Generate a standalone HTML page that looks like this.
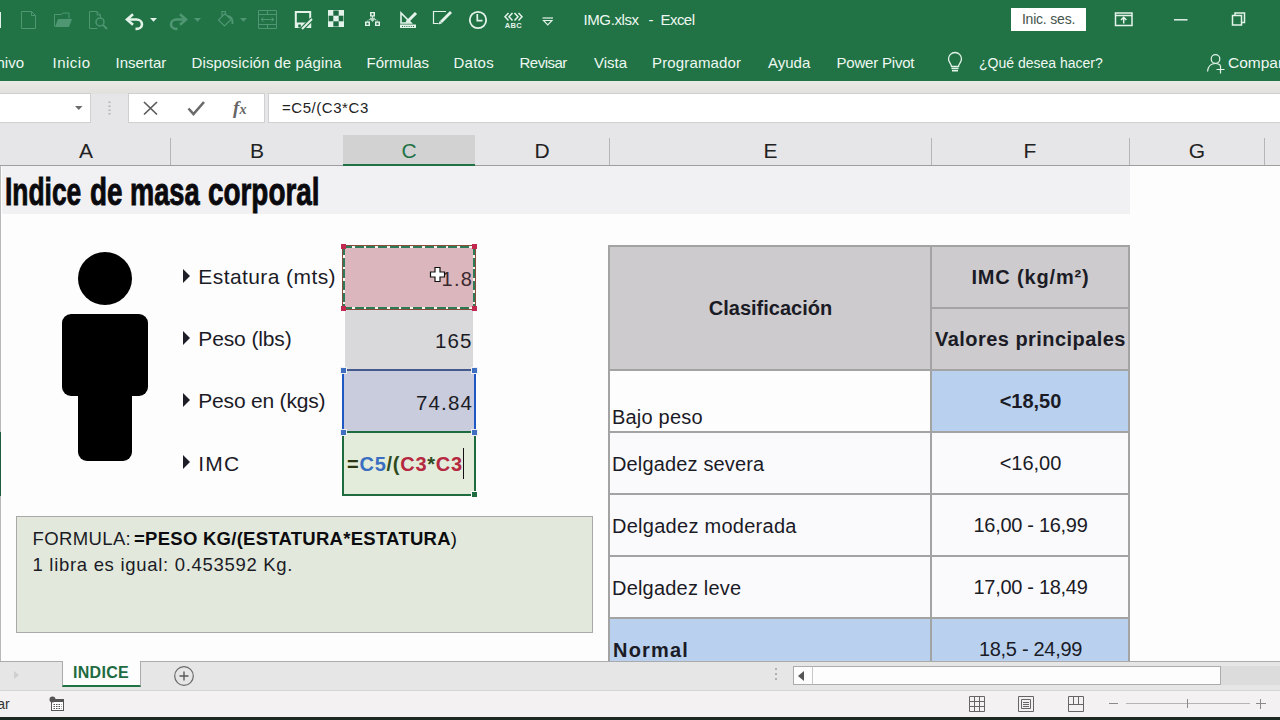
<!DOCTYPE html>
<html><head><meta charset="utf-8">
<style>
*{box-sizing:border-box;margin:0;padding:0}
html,body{width:1280px;height:720px;overflow:hidden;background:#e6e5e7;font-family:"Liberation Sans",sans-serif;}
.abs{position:absolute}
#top{position:absolute;left:0;top:0;width:1280px;height:81px;background:#217346}
.tab{position:absolute;top:53.700px;font-size:15px;line-height:18px;color:#eef8f1;white-space:pre}
#fbar div.box{position:absolute;top:93px;height:30px;background:#fff;border:1px solid #d0d0d0}
.colh{position:absolute;top:135px;height:31px;font-size:21px;line-height:32px;text-align:center;color:#222;border-bottom:1px solid #9e9e9e}
.cd{position:absolute;top:138px;width:1px;height:27px;background:#b5b5b5}
#sheet{position:absolute;left:0;top:166px;width:1280px;height:495px;background:#fefdfe;overflow:hidden}
.t{position:absolute;white-space:pre;font-size:20px;line-height:24px;color:#1b1b26}
.b{font-weight:bold}
.tri{position:absolute;width:0;height:0;border-left:7.500px solid #1e1e28;border-top:7.800px solid transparent;border-bottom:7.800px solid transparent}
.cell{position:absolute}
.hd{position:absolute;width:5px;height:5px}
.tb{position:absolute;background:#a3a3a3}
</style></head><body>
<!-- TITLE + RIBBON -->
<div id="top"></div>
<div id="title" class="abs" style="left:583.500px;top:11.300px;font-size:15px;line-height:18px;color:#eef8f1;white-space:pre;letter-spacing:-0.4px">IMG.xlsx</div><div class="abs" style="left:648.500px;top:11.300px;font-size:15px;line-height:18px;color:#eef8f1">-</div><div class="abs" style="left:660.500px;top:11.300px;font-size:15px;line-height:18px;color:#eef8f1;letter-spacing:-0.55px">Excel</div>
<div class="abs" style="left:1011px;top:8px;width:75px;height:23px;background:#fff;color:#46544c;font-size:14px;line-height:23px;text-align:center;letter-spacing:-0.2px">Inic. ses.</div>
<div id="tabs">
<div class="tab" style="left:-26px">Archivo</div>
<div class="tab" style="left:52.500px;letter-spacing:0.5px">Inicio</div>
<div class="tab" style="left:115.500px">Insertar</div>
<div class="tab" style="left:191.500px;letter-spacing:0.15px">Disposición de página</div>
<div class="tab" style="left:366.500px">Fórmulas</div>
<div class="tab" style="left:453.500px;letter-spacing:0.25px">Datos</div>
<div class="tab" style="left:519.500px;letter-spacing:-0.5px">Revisar</div>
<div class="tab" style="left:594px">Vista</div>
<div class="tab" style="left:652px;letter-spacing:0.15px">Programador</div>
<div class="tab" style="left:768px">Ayuda</div>
<div class="tab" style="left:836.500px;letter-spacing:-0.2px">Power Pivot</div>
<div class="tab" style="left:979px;font-size:14px">¿Qué desea hacer?</div>
<div class="tab" style="left:1228px;font-size:15.500px">Compartir</div>
</div>
<div id="icons">
<!-- partial save icon at far left -->
<div class="abs" style="left:0;top:12px;width:1px;height:16px;background:#e4f3ea"></div>
<svg class="abs" style="left:0;top:0" width="640" height="40" viewBox="0 0 640 40" fill="none">
<!-- new -->
<path d="M21.5 11.5h10l4 4v13h-14zM31.5 11.5v4h4" stroke="#4f9773" stroke-width="1"/>
<!-- open folder -->
<path d="M54.5 26.5v-12h7l1.5-1.500h6v5.500" stroke="#4f9773" stroke-width="1"/>
<path d="M55 27l3-8h14l-3 8z" fill="#4f9773"/>
<!-- print preview -->
<path d="M100.500 17v-2l-3.500-3.500h-7.500v17h8M97 11.500v3.500h3.500" stroke="#4f9773" stroke-width="1"/>
<circle cx="100" cy="22" r="4" stroke="#4f9773" stroke-width="1.500"/><path d="M103 25l4 4" stroke="#4f9773" stroke-width="1.800"/>
<!-- undo -->
<path d="M127.500 19.500h9a5.500 4.700 0 0 1 0 9.400h-1" stroke="#e4f3ea" stroke-width="2.600"/>
<path d="M133 14.300l-6 5.200l6 5.200" stroke="#e4f3ea" stroke-width="2.600"/>
<path d="M150 18h7l-3.500 3.800z" fill="#e4f3ea"/>
<!-- redo dim -->
<path d="M185.500 19.500h-9a5.500 4.700 0 0 0 0 9.400h1" stroke="#4f9773" stroke-width="2.600"/>
<path d="M180 14.300l6 5.200l-6 5.200" stroke="#4f9773" stroke-width="2.600"/>
<path d="M194 18h7l-3.500 3.800z" fill="#4f9773"/>
<!-- paint bucket dim -->
<path d="M218.500 20l6.500-6.500l6 6l-6.500 6.500zM222 16v-4.500h3.500v4" stroke="#4f9773" stroke-width="1.200"/>
<path d="M227 16c4 0 6 3 5.500 8" stroke="#4f9773" stroke-width="2"/>
<path d="M240 18h7l-3.500 3.800z" fill="#4f9773"/>
<!-- merge dim -->
<path d="M258.500 10.500h18v18h-18zM258.500 14.500h18M258.500 24.500h18M267.500 10.500v4M267.500 24.500v4" stroke="#4f9773" stroke-width="1"/>
<path d="M261 19.500h13M263.500 17.500l-2.500 2l2.500 2M271.500 17.500l2.500 2l-2.500 2" stroke="#4f9773" stroke-width="1"/>
<!-- save as -->
<rect x="295.800" y="12" width="14.400" height="15" stroke="#e4f3ea" stroke-width="2"/>
<rect x="296" y="22.500" width="14" height="5" fill="#e4f3ea"/>
<rect x="298.300" y="24.500" width="2.500" height="3" fill="#1d6a40"/>
<path d="M301.500 29.500l10.500-10.500" stroke="#217346" stroke-width="4.200"/>
<path d="M302 29l10-10" stroke="#e4f3ea" stroke-width="2"/>
<!-- checker -->
<rect x="328" y="10" width="16" height="17" fill="#e4f3ea"/>
<rect x="333.300" y="10.500" width="5.400" height="5.200" fill="#1d6a40"/><rect x="328.600" y="15.700" width="4.700" height="5.600" fill="#1d6a40"/><rect x="338.700" y="15.700" width="4.700" height="5.600" fill="#1d6a40"/><rect x="333.300" y="21.300" width="5.400" height="5.200" fill="#1d6a40"/>
<!-- org chart -->
<rect x="370" y="12" width="5" height="4.500" fill="#e4f3ea"/><rect x="365" y="21.500" width="5" height="4.500" fill="#e4f3ea"/><rect x="375" y="21.500" width="5" height="4.500" fill="#e4f3ea"/>
<path d="M372.500 16.500l-5 5M372.500 16.500l5 5" stroke="#e4f3ea" stroke-width="1.200" stroke-dasharray="1 1"/>
<path d="M370 19.500l2.500-2.500l2.500 2.500l-2.500 2.500z" fill="#e4f3ea" opacity="0.800"/>
<rect x="371.500" y="13.300" width="2" height="2" fill="#217346"/><rect x="366.500" y="22.800" width="2" height="2" fill="#217346"/><rect x="376.500" y="22.800" width="2" height="2" fill="#217346"/>
<!-- design mode -->
<path d="M401 13v10h10z" stroke="#e4f3ea" stroke-width="1.600"/>
<rect x="400" y="24.500" width="16" height="3.500" fill="#e4f3ea"/>
<path d="M402 26.500h12" stroke="#217346" stroke-width="1" stroke-dasharray="1 1.200"/>
<path d="M407 22l9-9" stroke="#e4f3ea" stroke-width="3"/><path d="M405.500 23.500l1-3l2 2z" fill="#e4f3ea"/>
<!-- edit box pencil -->
<path d="M446 11.500h-12.500v12h5" stroke="#e4f3ea" stroke-width="1.200"/>
<path d="M441 22l10-10" stroke="#e4f3ea" stroke-width="2.800"/><path d="M438.500 24.500l1.200-3.600l2.400 2.400z" fill="#e4f3ea"/>
<!-- clock -->
<circle cx="478" cy="20" r="8.200" stroke="#e4f3ea" stroke-width="1.800"/><path d="M477.300 14v6.700h5.200" stroke="#e4f3ea" stroke-width="1.700"/>
<!-- ABC -->
<path d="M508.500 13l-3.500 3.800l3.500 3.800M512.500 13l-3.500 3.800l3.500 3.800M514.500 13l3.500 3.800l-3.500 3.800M518.500 13l3.500 3.800l-3.500 3.800" stroke="#e4f3ea" stroke-width="1.500"/>
<text x="504.800" y="27.600" font-family="Liberation Sans" font-size="7.500" font-weight="bold" fill="#e4f3ea" letter-spacing="0.300">ABC</text>
<!-- customize -->
<path d="M542.500 18h10.500" stroke="#e4f3ea" stroke-width="1.200"/><path d="M543.500 20.500h8.500l-4.250 4.500z" stroke="#e4f3ea" stroke-width="1.100"/>
</svg>
<svg class="abs" style="left:1100px;top:0" width="180" height="80" viewBox="1100 0 180 80" fill="none">
<!-- ribbon display -->
<path d="M1115.500 13h16.500v12.500h-16.500z" stroke="#e4f3ea" stroke-width="1.500"/><path d="M1115.500 15.500h16.500" stroke="#e4f3ea" stroke-width="1.500"/>
<path d="M1123.700 23.500v-6M1121 20l2.700-2.700l2.700 2.700" stroke="#e4f3ea" stroke-width="1.500"/>
<!-- minimize -->
<path d="M1174 19.800h13.500" stroke="#e4f3ea" stroke-width="1.500"/>
<!-- restore -->
<path d="M1232.500 15.500h9v9.500h-9z" stroke="#e4f3ea" stroke-width="1.500"/><path d="M1235 15.500v-2.500h9.500v9.500h-3" stroke="#e4f3ea" stroke-width="1.500"/>
<!-- person+ -->
<circle cx="1215.500" cy="59" r="4.300" stroke="#e4f3ea" stroke-width="1.200"/>
<path d="M1207.500 71.500c0.500-5 3.500-8 8-8c2.500 0 4 0.800 5 2" stroke="#e4f3ea" stroke-width="1.200"/>
<path d="M1216.500 69.500h8M1220.500 65.500v8" stroke="#e4f3ea" stroke-width="1.200"/>
</svg>
<!-- lightbulb -->
<svg class="abs" style="left:945px;top:50px" width="22" height="24" viewBox="945 50 22 24" fill="none">
<path d="M951.500 66.500c0-2.500-3-4-3-7.500a6.500 6.500 0 0 1 13 0c0 3.500-3 5-3 7.500z" stroke="#e4f3ea" stroke-width="1.300"/>
<path d="M951.500 68.500h7M952 70.800h6" stroke="#e4f3ea" stroke-width="1.400"/>
</svg>
</div>
<!-- FORMULA BAR -->
<div class="abs" style="left:0;top:81px;width:1280px;height:13px;background:linear-gradient(#eceae7,#e2e0dc)"></div>
<div id="fbar">
<div class="box" style="left:-2px;width:93px"></div>
<div class="box" style="left:128px;width:137px"></div>
<div class="box" style="left:268px;width:1020px"></div>
<div class="abs" style="left:282px;top:99px;font-size:15px;line-height:18px;color:#222;white-space:pre;letter-spacing:0.55px">=C5/(C3*C3</div>
</div>
<!-- formula bar glyphs -->
<svg class="abs" style="left:60px;top:90px" width="220" height="36" viewBox="60 90 220 36" fill="none">
<path d="M75 106h7.500l-3.750 4z" fill="#6a6a6a"/>
<path d="M109.500 101.500v1.500M109.500 105.500v1.500M109.500 109.500v1.500M109.500 113v1.500" stroke="#b4b4b4" stroke-width="2"/>
<path d="M144 102l13 12.500M157 102l-13 12.500" stroke="#5a5a5a" stroke-width="1.700"/>
<path d="M188.500 108.500l5 5.500l10.500-12" stroke="#6a6a6a" stroke-width="2.600"/>
<text x="233" y="113.500" font-family="Liberation Serif" font-style="italic" font-weight="bold" font-size="19" fill="#666">f</text>
<text x="239.500" y="113.500" font-family="Liberation Serif" font-style="italic" font-weight="bold" font-size="14" fill="#666">x</text>
</svg>
<!-- COLUMN HEADERS -->
<div id="colheads">
<div class="colh" style="left:0;width:1280px"></div>
<div class="colh" style="left:343px;width:132px;background:#d2d2d2;border-bottom:2px solid #217346"></div>
<div class="colh" style="left:2px;width:168px">A</div>
<div class="colh" style="left:171px;width:172px">B</div>
<div class="colh" style="left:343px;width:132px;color:#217346;border:none">C</div>
<div class="colh" style="left:475px;width:134px">D</div>
<div class="colh" style="left:610px;width:321px">E</div>
<div class="colh" style="left:931px;width:198px">F</div>
<div class="colh" style="left:1130px;width:134px">G</div>
<div class="cd" style="left:170px"></div><div class="cd" style="left:609px"></div><div class="cd" style="left:931px"></div><div class="cd" style="left:1129px"></div><div class="cd" style="left:1264px"></div>
</div>
<!-- SHEET -->
<div id="sheet"><div class="abs" style="left:0;top:-166px;width:1280px;height:720px">
<!-- left edge -->
<div class="abs" style="left:0;top:166px;width:1px;height:266px;background:#b9b9b9"></div>
<div class="abs" style="left:0;top:432px;width:1px;height:64px;background:#1f5c40"></div>
<div class="abs" style="left:0;top:496px;width:1px;height:165px;background:#b9b9b9"></div>
<!-- row 1 title band -->
<div class="abs" style="left:2px;top:166px;width:1128px;height:48px;background:#f1f0f2"></div>
<div class="abs b" style="left:5.07px;top:171px;font-size:38px;line-height:42px;color:#0a0a0e;white-space:pre;transform-origin:0 0;transform:scaleX(0.6941);-webkit-text-stroke:0.9px #0a0a0e">Indice</div>
<div class="abs b" style="left:89.99px;top:171px;font-size:38px;line-height:42px;color:#0a0a0e;white-space:pre;transform-origin:0 0;transform:scaleX(0.7326);-webkit-text-stroke:0.9px #0a0a0e">de</div>
<div class="abs b" style="left:129.92px;top:171px;font-size:38px;line-height:42px;color:#0a0a0e;white-space:pre;transform-origin:0 0;transform:scaleX(0.7163);-webkit-text-stroke:0.9px #0a0a0e">masa</div>
<div class="abs b" style="left:208.19px;top:171px;font-size:38px;line-height:42px;color:#0a0a0e;white-space:pre;transform-origin:0 0;transform:scaleX(0.7333);-webkit-text-stroke:0.9px #0a0a0e">corporal</div>
<!-- person -->
<div class="abs" style="left:78px;top:252px;width:54px;height:53px;border-radius:50%;background:#000"></div>
<div class="abs" style="left:62px;top:314px;width:86px;height:82px;border-radius:9px;background:#000"></div>
<div class="abs" style="left:78px;top:380px;width:54px;height:81px;border-radius:0 0 9px 9px;background:#000"></div>
<!-- labels -->
<div class="tri" style="left:182.700px;top:268.800px"></div><div class="t" style="left:198.300px;top:265.300px;font-size:21px;letter-spacing:0.42px">Estatura (mts)</div>
<div class="tri" style="left:182.700px;top:330.800px"></div><div class="t" style="left:198.300px;top:327.100px;font-size:21px;letter-spacing:-0.12px">Peso (lbs)</div>
<div class="tri" style="left:182.700px;top:393px"></div><div class="t" style="left:198.300px;top:389.100px;font-size:21px;letter-spacing:-0.2px">Peso en (kgs)</div>
<div class="tri" style="left:182.700px;top:455px"></div><div class="t" style="left:198.300px;top:451.500px;font-size:21px;letter-spacing:1.2px">IMC</div>
<!-- C cells -->
<div class="cell" style="left:345px;top:310px;width:128px;height:59px;background:#d9d9db"></div>
<div class="cell" style="left:342px;top:245px;width:134px;height:65px;background:#dbb6bc;border:1px solid #8a4a3c"></div>
<div class="cell" style="left:343px;top:246px;width:132px;height:2px;background:repeating-linear-gradient(90deg,#2d7a57 0 9px,#f4f4f0 9px 11.700px)"></div>
<div class="cell" style="left:343px;top:307px;width:132px;height:2px;background:repeating-linear-gradient(90deg,#2d7a57 0 9px,#f4f4f0 9px 11.700px)"></div>
<div class="cell" style="left:343px;top:246px;width:2px;height:63px;background:repeating-linear-gradient(180deg,#2d7a57 0 9px,#f4f4f0 9px 11.700px)"></div>
<div class="cell" style="left:473px;top:246px;width:2px;height:63px;background:repeating-linear-gradient(180deg,#2d7a57 0 9px,#f4f4f0 9px 11.700px)"></div>
<div class="cell" style="left:342px;top:369px;width:134px;height:64px;background:#c9ccdc;border-left:2px solid #1f57c3;border-right:2px solid #1f57c3;border-top:2px solid #445a8c"></div>
<div class="cell" style="left:342px;top:431px;width:134px;height:65px;background:#e3ecda;border:2px solid #1e6b3f"></div>
<div class="t" style="left:380px;top:266.500px;width:93.300px;text-align:right;color:#3a2a30;letter-spacing:1.3px">1.8</div>
<div class="t" style="left:380px;top:329px;width:92.600px;text-align:right;letter-spacing:1.1px;font-size:20.500px">165</div>
<div class="t" style="left:380px;top:391px;width:92.900px;text-align:right;letter-spacing:1.1px;font-size:20.500px">74.84</div>
<div class="t b" style="left:347px;top:452px;letter-spacing:0.75px"><span style="color:#2a3612">=</span><span style="color:#3a6ec0">C5</span><span style="color:#2e4a1e">/(</span><span style="color:#b5283f">C3</span><span style="color:#2e4a1e">*</span><span style="color:#b5283f">C3</span></div>
<div class="abs" style="left:463px;top:448px;width:1px;height:31px;background:#111"></div>
<svg class="abs" style="left:429px;top:266px" width="17" height="17" viewBox="0 0 17 17"><path d="M6 1.500h5v4.500h4.500v5h-4.500v4.500h-5v-4.500h-4.500v-5h4.500z" fill="#fff" stroke="#111" stroke-width="1.200"/></svg>
<!-- handles -->
<div class="hd" style="left:341px;top:244px;background:#c2284f"></div><div class="hd" style="left:472px;top:244px;background:#c2284f"></div>
<div class="hd" style="left:341px;top:306px;background:#c2284f"></div><div class="hd" style="left:472px;top:306px;background:#c2284f"></div>
<div class="hd" style="left:341px;top:368px;background:#3f6fc0;box-shadow:0 0 0 1px #eef0f6"></div><div class="hd" style="left:472px;top:368px;background:#3f6fc0;box-shadow:0 0 0 1px #eef0f6"></div>
<div class="hd" style="left:341px;top:430px;background:#3f6fc0;box-shadow:0 0 0 1px #eef0f6"></div><div class="hd" style="left:472px;top:430px;background:#3f6fc0;box-shadow:0 0 0 1px #eef0f6"></div>
<div class="hd" style="left:472px;top:492px;background:#1e6b3f;outline:1px solid #fdfdfd"></div>
<!-- note box -->
<div class="abs" style="left:16px;top:516px;width:577px;height:117px;background:#e2e9dc;border:1px solid #a9a9a9"></div>
<div class="t" style="left:32.500px;top:526.900px;font-size:18.500px;letter-spacing:0.38px">FORMULA:</div>
<div class="t b" style="left:134px;top:526.900px;font-size:18.500px;color:#0c0c10;letter-spacing:0.27px">=PESO KG/(ESTATURA*ESTATURA<span style="font-weight:normal">)</span></div>
<div class="t" style="left:32.500px;top:553.200px;font-size:18.500px;letter-spacing:0.7px">1 libra es igual: 0.453592 Kg.</div>
<!-- TABLE -->
<div class="abs" style="left:609px;top:246px;width:521px;height:125px;background:#cdcbcd"></div>
<div class="abs" style="left:609px;top:432px;width:521px;height:186px;background:#fafafd"></div>
<div class="abs" style="left:931px;top:370px;width:198px;height:62px;background:#b9d1ee"></div>
<div class="abs" style="left:609px;top:618px;width:521px;height:50px;background:#b9d1ee"></div>
<div class="tb" style="left:608px;top:245px;width:522px;height:2px"></div>
<div class="tb" style="left:608px;top:245px;width:2px;height:420px"></div>
<div class="tb" style="left:930px;top:245px;width:2px;height:420px"></div>
<div class="tb" style="left:1128px;top:245px;width:2px;height:420px"></div>
<div class="tb" style="left:931px;top:307px;width:198px;height:2px"></div>
<div class="tb" style="left:608px;top:369px;width:522px;height:2px"></div>
<div class="tb" style="left:608px;top:431px;width:522px;height:2px"></div>
<div class="tb" style="left:608px;top:493px;width:522px;height:2px"></div>
<div class="tb" style="left:608px;top:555px;width:522px;height:2px"></div>
<div class="tb" style="left:608px;top:617px;width:522px;height:2px"></div>
<div class="t b" style="left:610px;top:296px;width:321px;text-align:center">Clasificación</div>
<div class="t b" style="left:932px;top:265px;width:197px;text-align:center;letter-spacing:0.85px">IMC (kg/m²)</div>
<div class="t b" style="left:932px;top:327px;width:197px;text-align:center;letter-spacing:0.45px">Valores principales</div>
<div class="t b" style="left:932px;top:389px;width:197px;text-align:center">&lt;18,50</div>
<div class="t" style="left:932px;top:451px;width:197px;text-align:center">&lt;16,00</div>
<div class="t" style="left:932px;top:513px;width:197px;text-align:center;letter-spacing:-0.3px">16,00 - 16,99</div>
<div class="t" style="left:932px;top:575px;width:197px;text-align:center;letter-spacing:-0.3px">17,00 - 18,49</div>
<div class="t" style="left:932px;top:637px;width:197px;text-align:center;letter-spacing:-0.3px">18,5 - 24,99</div>
<div class="t" style="left:612px;top:405px;letter-spacing:0.2px">Bajo peso</div>
<div class="t" style="left:612px;top:451.500px;letter-spacing:0.15px">Delgadez severa</div>
<div class="t" style="left:612px;top:513.500px;letter-spacing:0.27px">Delgadez moderada</div>
<div class="t" style="left:612px;top:575.500px;letter-spacing:0.2px">Delgadez leve</div>
<div class="t b" style="left:613px;top:637.500px;letter-spacing:1.2px">Normal</div>
</div></div>
<!-- BOTTOM -->
<div id="bottom">
<div class="abs" style="left:0;top:661px;width:1280px;height:1px;background:#ababab"></div>
<div class="abs" style="left:0;top:662px;width:1280px;height:28px;background:#e6e6e6"></div>
<!-- sheet tab -->
<div class="abs" style="left:62px;top:661px;width:79px;height:26px;background:#fdfdfd;border-left:1px solid #ababab;border-right:1px solid #ababab;border-bottom:2px solid #217346"></div>
<div class="abs b" style="left:73px;top:662px;font-size:16px;line-height:22px;color:#1e6b41;letter-spacing:0.3px">INDICE</div>
<div class="abs" style="left:14px;top:671px;width:0;height:0;border-left:5px solid #cfcfcf;border-top:4px solid transparent;border-bottom:4px solid transparent"></div>
<svg class="abs" style="left:172px;top:664px" width="24" height="24" viewBox="0 0 24 24"><circle cx="12" cy="12" r="9.3" fill="none" stroke="#6a6a6a" stroke-width="1.2"/><path d="M7.5 12H16.5M12 7.5V16.5" stroke="#5a5a5a" stroke-width="1.4" fill="none"/></svg>
<!-- h scrollbar -->
<div class="abs" style="left:775px;top:668px;width:2px;height:2px;background:#b0b0b0;box-shadow:0 5px 0 #b0b0b0,0 10px 0 #b0b0b0"></div>
<div class="abs" style="left:793px;top:666px;width:487px;height:19px;background:#dcdcdc"></div>
<div class="abs" style="left:793px;top:666px;width:20px;height:19px;background:#fdfdfd;border:1px solid #ababab"></div>
<div class="abs" style="left:798px;top:671px;width:0;height:0;border-right:6px solid #555;border-top:5px solid transparent;border-bottom:5px solid transparent"></div>
<div class="abs" style="left:812px;top:666px;width:409px;height:19px;background:#fdfdfd;border:1px solid #ababab;border-left:1px solid #c8c8c8"></div>
<!-- status bar -->
<div class="abs" style="left:0;top:690px;width:1280px;height:1px;background:#d4d4d4"></div>
<div class="abs" style="left:0;top:691px;width:1280px;height:26px;background:#f4f1f2"></div>
<div class="abs" style="left:-38.500px;top:695px;font-size:14px;line-height:18px;color:#333;white-space:pre">Señalar</div>
<svg class="abs" style="left:49px;top:696px" width="16" height="16" viewBox="0 0 16 16"><rect x="2.5" y="3.5" width="12" height="11" fill="#fff" stroke="#555" stroke-width="1"/><rect x="2" y="3" width="13" height="3" fill="#555"/><path d="M4.5 8.5h8M4.5 10.5h8M4.5 12.5h8" stroke="#555" stroke-width="1" stroke-dasharray="1.5 1"/><circle cx="3.5" cy="3.5" r="3" fill="#555"/></svg>
<!-- view icons -->
<svg class="abs" style="left:969px;top:696px" width="16" height="16" viewBox="0 0 16 16"><path d="M.5.5h15v15H.5zM5.5.5v15M10.5.5v15M.5 5.5h15M.5 10.5h15" fill="none" stroke="#666" stroke-width="1"/></svg>
<svg class="abs" style="left:1018px;top:696px" width="16" height="16" viewBox="0 0 16 16"><path d="M.5.5h15v15H.5z" fill="none" stroke="#666"/><path d="M3.5 3.5h9v9h-9zM5 6.5h6M5 8.5h6M5 10.5h6" fill="none" stroke="#666"/></svg>
<svg class="abs" style="left:1068px;top:696px" width="16" height="16" viewBox="0 0 16 16"><path d="M.5.5h15v15H.5z" fill="none" stroke="#666"/><path d="M5.5.5v8h5v-8M.5 8.5h15" fill="none" stroke="#666"/></svg>
<div class="abs" style="left:1109px;top:703px;width:9px;height:1px;background:#8a8a8a"></div>
<div class="abs" style="left:1126px;top:703px;width:124px;height:1px;background:#b5b5b5"></div>
<div class="abs" style="left:1187px;top:699px;width:1px;height:9px;background:#8a8a8a"></div>
<div class="abs" style="left:1256px;top:703px;width:10px;height:1px;background:#8a8a8a"></div>
<div class="abs" style="left:1260px;top:699px;width:1px;height:10px;background:#8a8a8a"></div>
<!-- bottom dark strip -->
<div class="abs" style="left:0;top:717px;width:1280px;height:3px;background:#1a2a22"></div>
</div>
</body></html>
